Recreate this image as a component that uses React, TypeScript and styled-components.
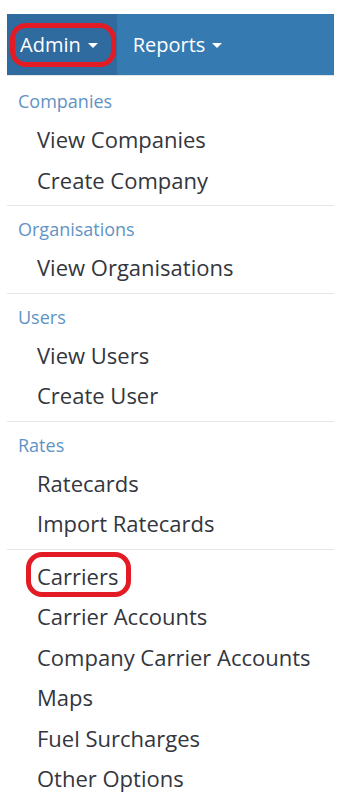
import React from "react";
import styled, { createGlobalStyle } from "styled-components";

const GlobalStyle = createGlobalStyle`
    body {
        margin: 0;
        background: #fff;
        font-family: "Open Sans", "Liberation Sans", sans-serif;
    }
`;

const Page = styled.div`
    width: 327px;
    padding: 14px 13px 0 7px;
`;

const NavBar = styled.nav`
    display: flex;
    height: 61px;
    background: #357ab1;
`;

const NavLink = styled.div<{ $active?: boolean }>`
    position: relative;
    display: flex;
    align-items: center;
    gap: 7px;
    padding: 0 19px 0 ${(p) => (p.$active ? 13 : 16)}px;
    color: #fff;
    font-size: 20px;
    background: ${(p) => (p.$active ? "#2f6b9f" : "transparent")};
`;

const Caret = styled.span`
    width: 0;
    height: 0;
    margin-top: 2px;
    border-top: 5px solid #fff;
    border-left: 5px solid transparent;
    border-right: 5px solid transparent;
`;

/* red hand-drawn highlight laid over a link */
const Highlight = styled.span<{ $left: number; $top: number; $w: number; $h: number }>`
    position: absolute;
    left: ${(p) => p.$left}px;
    top: ${(p) => p.$top}px;
    width: ${(p) => p.$w}px;
    height: ${(p) => p.$h}px;
    box-sizing: border-box;
    border: 5px solid #e31b25;
    border-radius: 16px;
    pointer-events: none;
`;

const Menu = styled.div`
    border-top: 1px solid #e2e4e6;
    padding-top: 8px;
`;

const SectionHeader = styled.div`
    height: 35px;
    line-height: 35px;
    padding-left: 11px;
    font-size: 18px;
    color: #5f93c4;
`;

const Item = styled.div`
    position: relative;
    height: 40.5px;
    line-height: 40px;
    padding-left: 30px;
    font-size: 22px;
    color: #33363d;
`;

const Divider = styled.hr`
    margin: 5px 0 6px;
    border: 0;
    height: 1px;
    background: #e5e5e5;
`;

const sections = [
    { title: "Companies", items: ["View Companies", "Create Company"] },
    { title: "Organisations", items: ["View Organisations"] },
    { title: "Users", items: ["View Users", "Create User"] },
    { title: "Rates", items: ["Ratecards", "Import Ratecards"] },
];

const carrierItems = [
    "Carriers",
    "Carrier Accounts",
    "Company Carrier Accounts",
    "Maps",
    "Fuel Surcharges",
    "Other Options",
];

export default function App() {
    return (
        <Page>
            <GlobalStyle />
            <NavBar>
                <NavLink $active>
                    Admin <Caret />
                    <Highlight $left={3} $top={9} $w={106} $h={44} />
                </NavLink>
                <NavLink>
                    Reports <Caret />
                </NavLink>
            </NavBar>
            <Menu>
                {sections.map((s) => (
                    <React.Fragment key={s.title}>
                        <SectionHeader>{s.title}</SectionHeader>
                        {s.items.map((i) => (
                            <Item key={i}>{i}</Item>
                        ))}
                        <Divider />
                    </React.Fragment>
                ))}
                {carrierItems.map((i) => (
                    <Item key={i}>
                        {i}
                        {i === "Carriers" && <Highlight $left={19} $top={-4} $w={105} $h={45} />}
                    </Item>
                ))}
            </Menu>
        </Page>
    );
}
